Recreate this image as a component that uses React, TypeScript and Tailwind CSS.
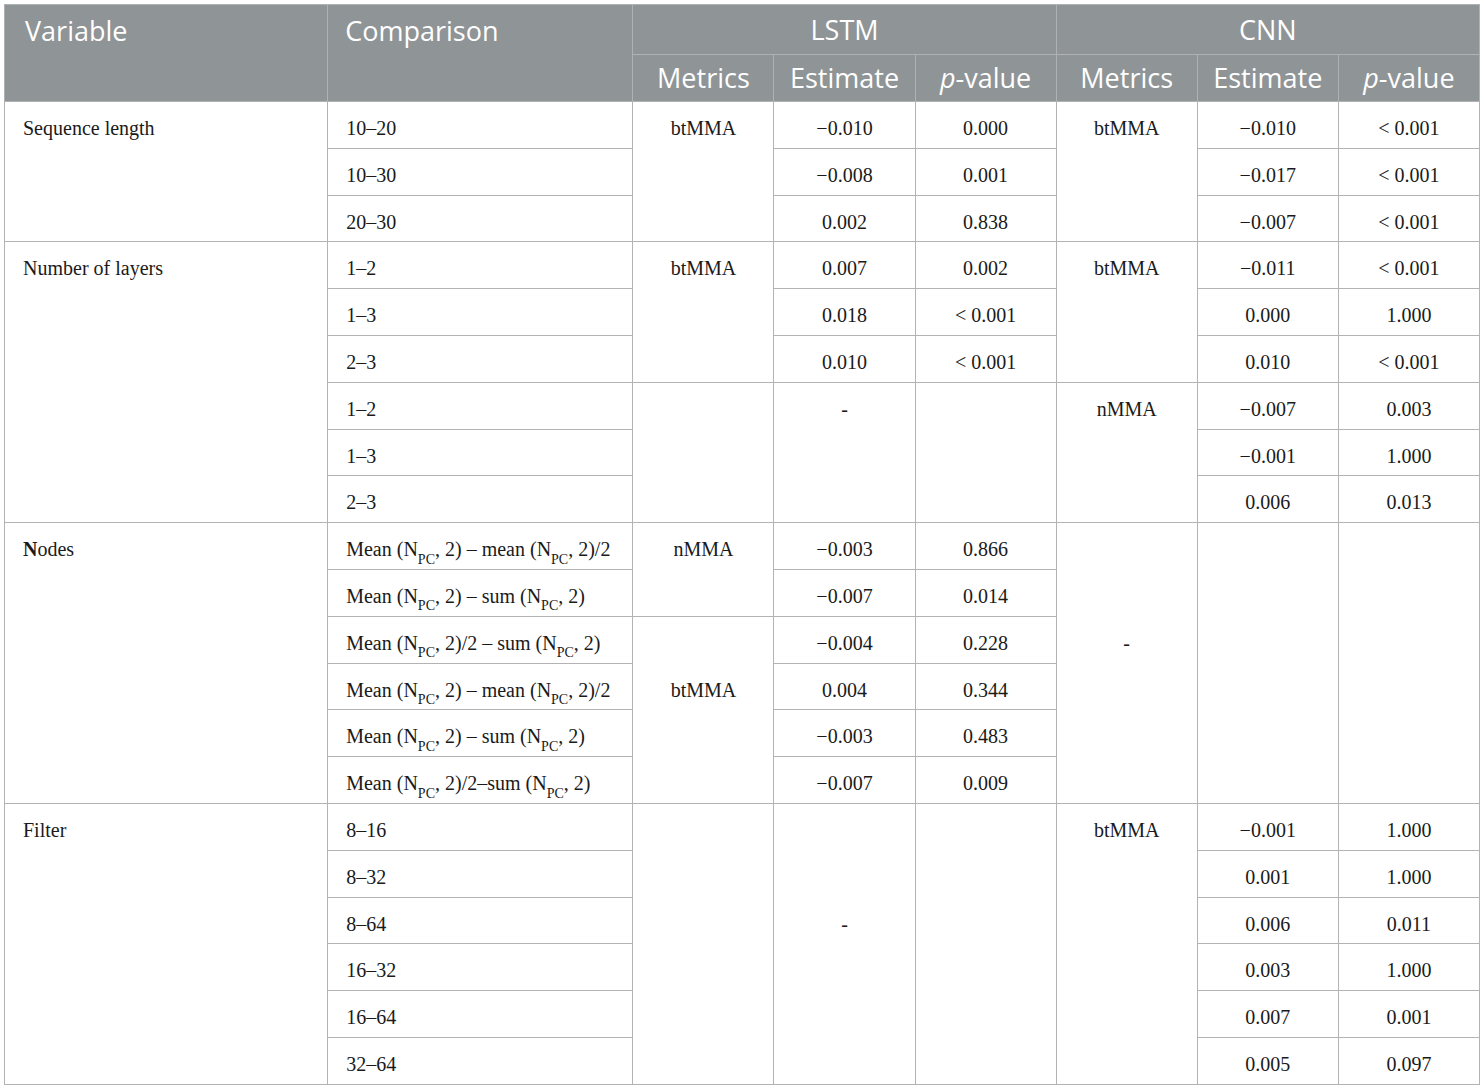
import type { ReactNode } from 'react'

const serif = "font-['Liberation_Serif','Times_New_Roman',serif]"
const sans = "font-['Open_Sans','Noto_Sans',sans-serif]"

const th = `border border-[#aeb2b5] bg-[#8f9497] text-white font-normal text-[27px] leading-[32px] ${sans}`
const td = `border border-[#b3b3b3] align-top pt-[14px] text-[20px] leading-[24px] text-[#1a1a1a] ${serif}`

function Npc() {
	return (
		<>
			N<sub className="text-[14px] align-[-4px]">PC</sub>
		</>
	)
}

function Cell({
	children,
	left,
	rowSpan,
	pad,
}: {
	children?: ReactNode
	left?: boolean
	rowSpan?: number
	pad?: string
}) {
	return (
		<td
			rowSpan={rowSpan}
			className={`${td} ${left ? 'text-left pl-[18px]' : 'text-center'} ${pad ?? ''}`}
		>
			{children}
		</td>
	)
}

const P = () => (
	<>
		<i>p</i>-value
	</>
)

export default function App() {
	return (
		<div className="min-h-screen bg-white p-[4px] pr-[4px]">
			<table className="w-[1476px] table-fixed border-collapse border border-[#b8bcbc]">
				<colgroup>
					<col className="w-[323px]" />
					<col className="w-[305px]" />
					<col className="w-[141px]" />
					<col className="w-[141px]" />
					<col className="w-[141px]" />
					<col className="w-[141px]" />
					<col className="w-[141px]" />
					<col className="w-[141px]" />
				</colgroup>
				<thead>
					<tr className="h-[50px]">
						<th rowSpan={2} className={`${th} text-left align-top pl-[20px] pt-[10px]`}>
							Variable
						</th>
						<th rowSpan={2} className={`${th} text-left align-top pl-[17px] pt-[10px]`}>
							Comparison
						</th>
						<th colSpan={3} className={th}>
							LSTM
						</th>
						<th colSpan={3} className={th}>
							CNN
						</th>
					</tr>
					<tr className="h-[47px]">
						<th className={th}>Metrics</th>
						<th className={th}>Estimate</th>
						<th className={th}>
							<P />
						</th>
						<th className={th}>Metrics</th>
						<th className={th}>Estimate</th>
						<th className={th}>
							<P />
						</th>
					</tr>
				</thead>
				<tbody>
					{/* Sequence length */}
					<tr className="h-[46.8px]">
						<Cell left rowSpan={3}>Sequence length</Cell>
						<Cell left>10–20</Cell>
						<Cell rowSpan={3}>btMMA</Cell>
						<Cell>−0.010</Cell>
						<Cell>0.000</Cell>
						<Cell rowSpan={3}>btMMA</Cell>
						<Cell>−0.010</Cell>
						<Cell>&lt; 0.001</Cell>
					</tr>
					<tr className="h-[46.8px]">
						<Cell left>10–30</Cell>
						<Cell>−0.008</Cell>
						<Cell>0.001</Cell>
						<Cell>−0.017</Cell>
						<Cell>&lt; 0.001</Cell>
					</tr>
					<tr className="h-[46.8px]">
						<Cell left>20–30</Cell>
						<Cell>0.002</Cell>
						<Cell>0.838</Cell>
						<Cell>−0.007</Cell>
						<Cell>&lt; 0.001</Cell>
					</tr>

					{/* Number of layers */}
					<tr className="h-[46.8px]">
						<Cell left rowSpan={6}>Number of layers</Cell>
						<Cell left>1–2</Cell>
						<Cell rowSpan={3}>btMMA</Cell>
						<Cell>0.007</Cell>
						<Cell>0.002</Cell>
						<Cell rowSpan={3}>btMMA</Cell>
						<Cell>−0.011</Cell>
						<Cell>&lt; 0.001</Cell>
					</tr>
					<tr className="h-[46.8px]">
						<Cell left>1–3</Cell>
						<Cell>0.018</Cell>
						<Cell>&lt; 0.001</Cell>
						<Cell>0.000</Cell>
						<Cell>1.000</Cell>
					</tr>
					<tr className="h-[46.8px]">
						<Cell left>2–3</Cell>
						<Cell>0.010</Cell>
						<Cell>&lt; 0.001</Cell>
						<Cell>0.010</Cell>
						<Cell>&lt; 0.001</Cell>
					</tr>
					<tr className="h-[46.8px]">
						<Cell left>1–2</Cell>
						<Cell rowSpan={3} />
						<Cell rowSpan={3}>-</Cell>
						<Cell rowSpan={3} />
						<Cell rowSpan={3}>nMMA</Cell>
						<Cell>−0.007</Cell>
						<Cell>0.003</Cell>
					</tr>
					<tr className="h-[46.8px]">
						<Cell left>1–3</Cell>
						<Cell>−0.001</Cell>
						<Cell>1.000</Cell>
					</tr>
					<tr className="h-[46.8px]">
						<Cell left>2–3</Cell>
						<Cell>0.006</Cell>
						<Cell>0.013</Cell>
					</tr>

					{/* Nodes */}
					<tr className="h-[46.8px]">
						<Cell left rowSpan={6}>
							<b>N</b>odes
						</Cell>
						<Cell left>
							Mean (<Npc />, 2) – mean (<Npc />, 2)/2
						</Cell>
						<Cell rowSpan={2}>nMMA</Cell>
						<Cell>−0.003</Cell>
						<Cell>0.866</Cell>
						<Cell rowSpan={6} pad="pt-[108px]">
							-
						</Cell>
						<Cell rowSpan={6} />
						<Cell rowSpan={6} />
					</tr>
					<tr className="h-[46.8px]">
						<Cell left>
							Mean (<Npc />, 2) – sum (<Npc />, 2)
						</Cell>
						<Cell>−0.007</Cell>
						<Cell>0.014</Cell>
					</tr>
					<tr className="h-[46.8px]">
						<Cell left>
							Mean (<Npc />, 2)/2 – sum (<Npc />, 2)
						</Cell>
						<Cell rowSpan={4} pad="pt-[61px]">
							btMMA
						</Cell>
						<Cell>−0.004</Cell>
						<Cell>0.228</Cell>
					</tr>
					<tr className="h-[46.8px]">
						<Cell left>
							Mean (<Npc />, 2) – mean (<Npc />, 2)/2
						</Cell>
						<Cell>0.004</Cell>
						<Cell>0.344</Cell>
					</tr>
					<tr className="h-[46.8px]">
						<Cell left>
							Mean (<Npc />, 2) – sum (<Npc />, 2)
						</Cell>
						<Cell>−0.003</Cell>
						<Cell>0.483</Cell>
					</tr>
					<tr className="h-[46.8px]">
						<Cell left>
							Mean (<Npc />, 2)/2–sum (<Npc />, 2)
						</Cell>
						<Cell>−0.007</Cell>
						<Cell>0.009</Cell>
					</tr>

					{/* Filter */}
					<tr className="h-[46.8px]">
						<Cell left rowSpan={6}>Filter</Cell>
						<Cell left>8–16</Cell>
						<Cell rowSpan={6} />
						<Cell rowSpan={6} pad="pt-[108px]">
							-
						</Cell>
						<Cell rowSpan={6} />
						<Cell rowSpan={6}>btMMA</Cell>
						<Cell>−0.001</Cell>
						<Cell>1.000</Cell>
					</tr>
					<tr className="h-[46.8px]">
						<Cell left>8–32</Cell>
						<Cell>0.001</Cell>
						<Cell>1.000</Cell>
					</tr>
					<tr className="h-[46.8px]">
						<Cell left>8–64</Cell>
						<Cell>0.006</Cell>
						<Cell>0.011</Cell>
					</tr>
					<tr className="h-[46.8px]">
						<Cell left>16–32</Cell>
						<Cell>0.003</Cell>
						<Cell>1.000</Cell>
					</tr>
					<tr className="h-[46.8px]">
						<Cell left>16–64</Cell>
						<Cell>0.007</Cell>
						<Cell>0.001</Cell>
					</tr>
					<tr className="h-[46.8px]">
						<Cell left>32–64</Cell>
						<Cell>0.005</Cell>
						<Cell>0.097</Cell>
					</tr>
				</tbody>
			</table>
		</div>
	)
}
